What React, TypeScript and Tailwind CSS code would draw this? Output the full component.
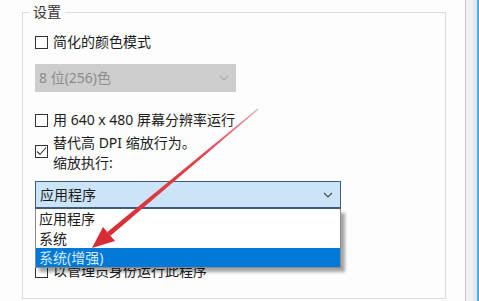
import React from 'react'

const FONT = "font-['Noto_Sans','Noto_Sans_CJK_SC',sans-serif]"

function Box({ checked = false }: { checked?: boolean }) {
  return (
    <span className="flex h-[13px] w-[13px] shrink-0 items-center justify-center border border-[#333] bg-white">
      {checked && (
        <svg width="11" height="11" viewBox="0 0 11 11" fill="none">
          <path d="M1 5.5 L4 8.5 L10 1.5" stroke="#333" strokeWidth="1.1" />
        </svg>
      )}
    </span>
  )
}

function Chevron({ color }: { color: string }) {
  return (
    <svg width="10" height="6" viewBox="0 0 10 6" fill="none">
      <path d="M1 1 L5 5 L9 1" stroke={color} strokeWidth="1.1" />
    </svg>
  )
}

export default function App() {
  return (
    <div className={`relative flex h-[301px] w-[479px] overflow-hidden bg-[#fdfdfd] text-[14px] leading-[20px] text-[#1c1c1c] ${FONT}`}>
      <div className="w-[465px] pl-[22px] pt-[2px]">
        <fieldset className="h-[297px] w-[424px] border border-[#dcdcdc] pl-[12px]">
          <legend className="-ml-[6px] px-[4px] leading-[20px] text-[#333]">设置</legend>

          <label className="mt-[10px] flex items-center gap-[5px]">
            <Box />
            <span>简化的颜色模式</span>
          </label>

          <div className="mt-[12px] flex h-[28px] w-[201px] items-center justify-between bg-[#cdcdcd] pl-[4px] pr-[7px] text-[#8c8c8c]">
            <span>8 位(256)色</span>
            <Chevron color="#a8a8a8" />
          </div>

          <label className="mt-[18px] flex items-center gap-[5px]">
            <Box />
            <span>用 640 x 480 屏幕分辨率运行</span>
          </label>

          <label className="mt-[3px] flex items-start gap-[5px]">
            <span className="mt-[12px]">
              <Box checked />
            </span>
            <span className="flex flex-col">
              <span>替代高 DPI 缩放行为。</span>
              <span>缩放执行:</span>
            </span>
          </label>

          <div className="relative mt-[8px] w-[306px]">
            <div className="flex h-[28px] items-center justify-between border border-b-2 border-[#3f5d78] bg-[#cce4f7] pl-[4px] pr-[7px]">
              <span>应用程序</span>
              <Chevron color="#4a4a4a" />
            </div>
            <ul className="absolute left-0 top-full z-10 w-[306px] border-x border-b border-[#8a8a8a] bg-white shadow-[4px_4px_3px_rgba(0,0,0,0.35)]">
              <li className="h-[20px] pl-[3px]">应用程序</li>
              <li className="h-[19px] pl-[3px] leading-[19px]">系统</li>
              <li className="h-[19px] bg-[#0078d7] pl-[3px] leading-[19px] text-[#d4ecfb]">系统(增强)</li>
            </ul>
          </div>

          <label className="mt-[52px] flex items-center gap-[5px]">
            <Box />
            <span>以管理员身份运行此程序</span>
          </label>
        </fieldset>
      </div>

      <div className="flex flex-1 border-l border-[#c8c8c8]">
        <div className="w-[7px] bg-[#f4eff1]" />
        <div className="w-[4px] bg-[#dce9f6]" />
        <div className="flex-1 bg-[#5ba7d8]" />
      </div>

      <svg className="pointer-events-none absolute left-0 top-0 z-20" width="479" height="301" viewBox="0 0 479 301">
        <defs>
          <linearGradient id="shaft" x1="258" y1="109" x2="109" y2="234" gradientUnits="userSpaceOnUse">
            <stop offset="0" stopColor="#e8a0a6" />
            <stop offset="0.35" stopColor="#e0444c" />
            <stop offset="1" stopColor="#d92c36" />
          </linearGradient>
        </defs>
        <polygon points="258.3,109.4 257.7,108.6 107.3,232 110.5,235.8" fill="url(#shaft)" />
        <polygon points="92,248 103,227 115,241" fill="#d92c36" />
      </svg>
    </div>
  )
}
